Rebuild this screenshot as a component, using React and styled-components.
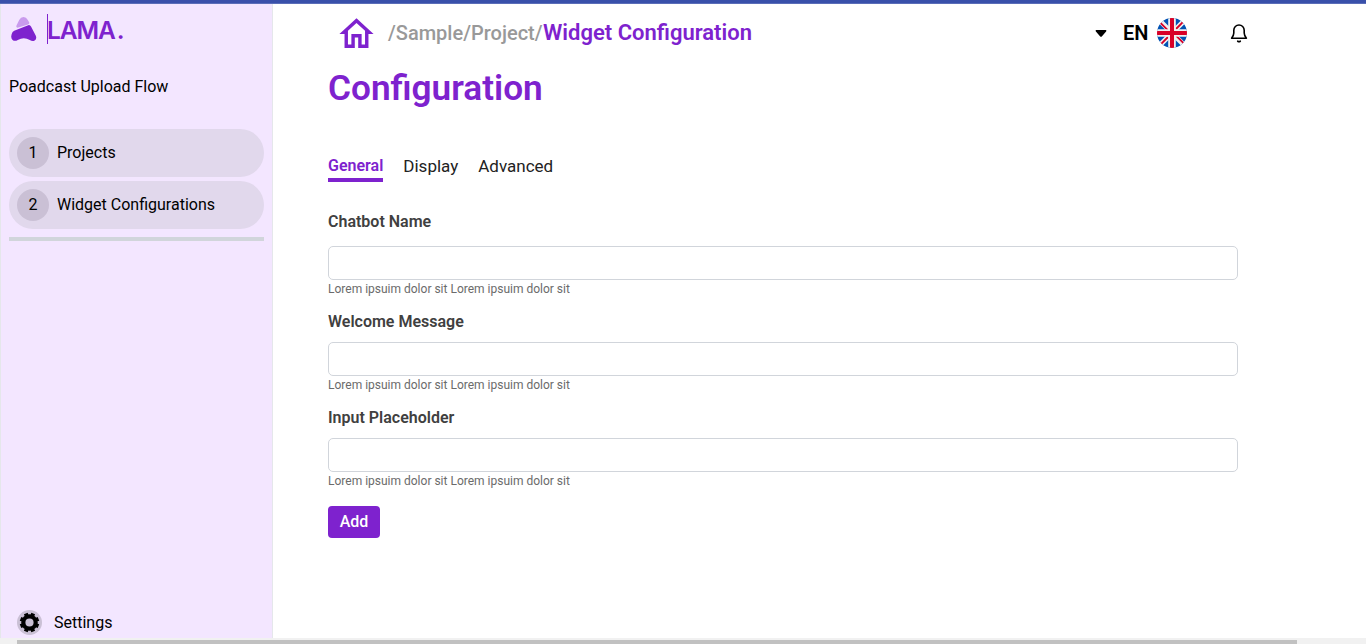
import React from "react";
import styled, { createGlobalStyle } from "styled-components";

const GlobalStyle = createGlobalStyle`
  *, *::before, *::after { box-sizing: border-box; }
  body { margin: 0; background: #fff; color: #000; font-family: Roboto, "Liberation Sans", sans-serif; font-size: 16px; overflow: hidden; }
  h1, p { margin: 0; }
  button, input { font-family: inherit; }
`;

const purple = "#7e22ce";

const Page = styled.div`
  height: 644px;
  display: flex;
  flex-direction: column;
`;
const TopStrip = styled.div`
  flex: none;
  height: 4px;
  background: #3950aa;
  border-bottom: 1px solid #5a6db8;
`;
const Body = styled.div`
  flex: 1;
  min-height: 0;
  display: flex;
`;
const Sidebar = styled.aside`
  flex: none;
  width: 273px;
  padding: 0 8px;
  display: flex;
  flex-direction: column;
  background: #f3e6ff;
  border: solid #e5e7eb;
  border-width: 0 1px;
`;
const Brand = styled.div`
  display: flex;
  align-items: flex-start;
  padding-top: 10px;
  height: 66px;
`;
const BrandMark = styled.svg`
  width: 26px;
  height: 26px;
  margin: 2px 10px 0 2px;
`;
const BrandName = styled.div`
  height: 30px;
  border-left: 1px solid ${purple};
  color: ${purple};
  font: 600 24.5px/32px Inter, sans-serif;
  letter-spacing: -1.1px;
  text-indent: -1px;
`;
const BrandDot = styled.span`
  margin-left: 2px;
`;
const FlowTitle = styled.p`
  line-height: 26px;
  height: 24px;
  margin: 4px 0 31px;
`;
const NavItem = styled.a`
  display: flex;
  align-items: center;
  gap: 8px;
  height: 48px;
  margin-bottom: 4px;
  padding: 0 8px;
  border-radius: 24px;
  background: #e1d8ec;
`;
const NavNumber = styled.span`
  width: 32px;
  height: 32px;
  border-radius: 50%;
  background: #cac0d5;
  line-height: 31px;
  text-align: center;
`;
const NavLabel = styled.span`
  line-height: 20px;
`;
const Divider = styled.div`
  height: 4px;
  margin-top: 4px;
  background: #d1d5db;
`;
const Settings = styled.div`
  display: flex;
  align-items: center;
  gap: 12px;
  height: 32px;
  margin-top: auto;
  padding-left: 8px;
`;
const SettingsIcon = styled.span`
  display: flex;
  width: 25px;
  height: 25px;
  border-radius: 50%;
  background: #cac0d5;
`;
const Main = styled.main`
  flex: 1;
  min-width: 0;
  padding: 0 128px 0 55px;
`;
const Header = styled.header`
  display: flex;
  align-items: center;
  height: 58px;
  margin-right: -11px;
  padding-left: 8px;

  > * { flex: none; }
`;
const HomeIcon = styled.svg`
  width: 41px;
  height: 42px;
  margin: 1px 11px 0 0;
`;
const Crumbs = styled.nav`
  width: 707px;
  font-size: 20px;
  font-weight: 500;
  line-height: 28px;
  color: #999;
  white-space: nowrap;
`;
const CurrentCrumb = styled.span`
  margin-left: 0.5px;
  font-size: 22px;
  font-weight: 600;
  color: ${purple};
`;
const Caret = styled.svg`
  width: 12px;
  height: 7px;
  margin-right: 16px;
`;
const Language = styled.span`
  width: 34px;
  font-size: 20px;
  font-weight: 600;
`;
const Flag = styled.svg`
  width: 30px;
  height: 30px;
`;
const Bell = styled.svg`
  width: 20px;
  height: 20px;
  margin-left: 42px;
`;
const Title = styled.h1`
  height: 50px;
  font-size: 35.2px;
  font-weight: 600;
  line-height: 53px;
  color: ${purple};
`;
const Tabs = styled.div`
  display: flex;
  align-items: flex-start;
  gap: 20px;
  height: 54px;
  margin-top: 42px;
`;
const Tab = styled.a`
  height: 28px;
  font-size: ${({ $active }) => ($active ? "16px" : "17px")};
  font-weight: ${({ $active }) => ($active ? 600 : 400)};
  line-height: ${({ $active }) => ($active ? "23px" : "25px")};
  color: ${({ $active }) => ($active ? purple : "#222")};
  border-bottom: ${({ $active }) => ($active ? `4px solid ${purple}` : "0")};
`;
const Field = styled.div`
  display: flex;
  flex-direction: column;
  height: ${({ $tall }) => ($tall ? "100px" : "96px")};
`;
const Label = styled.label`
  flex: 1;
  font-weight: 600;
  line-height: 27px;
  color: #404040;
`;
const Input = styled.input`
  width: 100%;
  height: 34px;
  border: 1px solid #d1d5db;
  border-radius: 5px;
  background: #fff;
`;
const Hint = styled.p`
  height: 28px;
  font-size: 12px;
  line-height: 18px;
  color: #6b6b6b;
`;
const AddButton = styled.button`
  display: block;
  width: 52px;
  height: 32px;
  margin-top: 6px;
  padding: 0 0 1px;
  border: 0;
  border-radius: 4px;
  background: ${purple};
  color: #fff;
  font-size: 16px;
  font-weight: 500;
  line-height: 31px;
`;
const ScrollTrack = styled.div`
  flex: none;
  height: 6px;
  padding: 2px 69px 0 17px;
  background: #f1f1f1;
`;
const ScrollThumb = styled.div`
  height: 4px;
  background: #c1c1c1;
`;

const fields = ["Chatbot Name", "Welcome Message", "Input Placeholder"];

export default function App() {
  return (
    <Page>
      <GlobalStyle />
      <TopStrip />
      <Body>
        <Sidebar>
          <Brand>
            <BrandMark viewBox="0 0 26 26">
              <path d="M6.5 11.7Q4.6 11.5 5.5 9.5L8.2 4Q9.7 1 12.5 1t4.3 3l1.5 2.6Q18.6 8 17 8.5Z" fill="#c99bed" />
              <path d="M3.2 14.8 17.2 9.2Q19 8.6 20 10.6l4.7 8.8Q26.3 23 23.3 24.7q-2 1-4.5-.8-6-3.4-12 0-3 1.8-5.2 0-2.8-3 0-8Z" fill={purple} />
            </BrandMark>
            <BrandName>LAMA<BrandDot>.</BrandDot></BrandName>
          </Brand>
          <FlowTitle>Poadcast Upload Flow</FlowTitle>
          <NavItem><NavNumber>1</NavNumber><NavLabel>Projects</NavLabel></NavItem>
          <NavItem><NavNumber>2</NavNumber><NavLabel>Widget Configurations</NavLabel></NavItem>
          <Divider />
          <Settings>
            <SettingsIcon>
              <svg viewBox="0 0 25 25" width="25" height="25">
                <circle cx="12.5" cy="12.5" r="6.2" fill="none" stroke="#000" strokeWidth="4.2" />
                {[22.5, 67.5, 112.5, 157.5].map((a) => (
                  <path key={a} d="M12.5 2.8V6M12.5 19v3.2" stroke="#000" strokeWidth="4" transform={`rotate(${a} 12.5 12.5)`} />
                ))}
              </svg>
            </SettingsIcon>
            Settings
          </Settings>
        </Sidebar>
        <Main>
          <Header>
            <HomeIcon viewBox="0 0 24 24" fill={purple} preserveAspectRatio="none">
              <path d="M12 3 2 12h3v8h6v-6h2v6h6v-8h3L12 3zm5 15h-2v-6H9v6H7v-7.81l5-4.5 5 4.5V18z" />
            </HomeIcon>
            <Crumbs>/Sample/Project/<CurrentCrumb>Widget Configuration</CurrentCrumb></Crumbs>
            <Caret viewBox="0 0 12 7"><path d="M1.2 0h9.6q1 .6.3 1.4L6.8 6.4q-.8.8-1.6 0L.9 1.4Q.2.6 1.2 0Z" /></Caret>
            <Language>EN</Language>
            <Flag viewBox="0 0 30 30">
              <defs><clipPath id="round"><circle cx="15" cy="15" r="15" /></clipPath></defs>
              <g clipPath="url(#round)">
                <path d="M0 0h30v30H0z" fill="#0052b4" />
                <path d="m0 0 30 30M30 0 0 30" stroke="#f0f0f0" strokeWidth="5" />
                <path d="m3.2 4.6 7.8 7.8M26.8 3.2 19 11M3.2 26.8 11 19M26.8 25.4 19 17.6" stroke="#d80027" strokeWidth="1.8" />
                <path d="M15 0v30M0 15h30" stroke="#f0f0f0" strokeWidth="7.6" />
                <path d="M15 0v30M0 15h30" stroke="#d80027" strokeWidth="4" />
              </g>
            </Flag>
            <Bell viewBox="0 0 20 20" fill="none" stroke="#000" strokeWidth="1.6" strokeLinecap="round" strokeLinejoin="round">
              <path d="M2.6 15.2h14.8Q15.2 12.5 15.2 10V7.2a5.2 5.2 0 0 0-10.4 0V10Q4.8 12.5 2.6 15.2Z" />
              <path d="M8.7 18.2q1.3.8 2.6 0" />
            </Bell>
          </Header>
          <Title>Configuration</Title>
          <Tabs>
            <Tab $active>General</Tab>
            <Tab>Display</Tab>
            <Tab>Advanced</Tab>
          </Tabs>
          {fields.map((name, i) => (
            <Field key={name} $tall={i === 0}>
              <Label>{name}</Label>
              <Input aria-label={name} />
              <Hint>Lorem ipsuim dolor sit Lorem ipsuim dolor sit</Hint>
            </Field>
          ))}
          <AddButton>Add</AddButton>
        </Main>
      </Body>
      <ScrollTrack><ScrollThumb /></ScrollTrack>
    </Page>
  );
}
